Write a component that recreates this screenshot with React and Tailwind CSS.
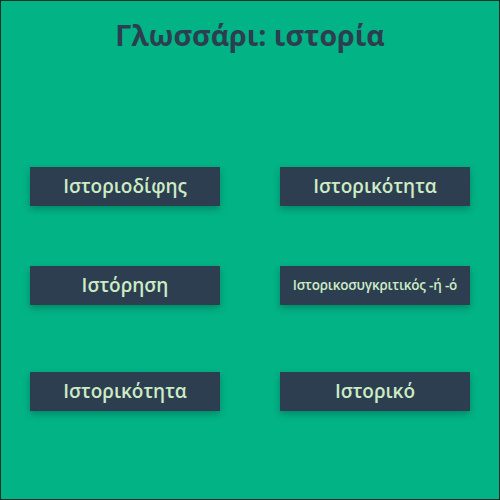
const rows = [
  { gap: 'mt-[112px]', items: [{ label: 'Ιστοριοδίφης' }, { label: 'Ιστορικότητα' }] },
  { gap: 'mt-[60px]', items: [{ label: 'Ιστόρηση' }, { label: 'Ιστορικοσυγκριτικός -ή -ό', small: true }] },
  { gap: 'mt-[67px]', items: [{ label: 'Ιστορικότητα' }, { label: 'Ιστορικό' }] },
];

function TermCard({ label, small }) {
  return (
    <div
      className={
        'flex h-[39px] w-[190px] items-center justify-center bg-[#2c3e50] font-semibold text-[#cdebc4] shadow-[0_3px_7px_rgba(0,0,0,0.25)] ' +
        (small ? 'text-[13.5px] tracking-[-0.2px]' : 'text-[19px]')
      }
    >
      {label}
    </div>
  );
}

export default function App() {
  return (
    <div
      className="h-[500px] w-[500px] border border-[#163028] bg-[#02b386]"
      style={{ fontFamily: '"Open Sans", "Noto Sans", sans-serif' }}
    >
      <h1 className="pt-[14px] text-center text-[28.5px] font-bold leading-[40px] text-[#2c3e50]">
        Γλωσσάρι: ιστορία
      </h1>
      {rows.map((row, i) => (
        <div key={i} className={row.gap + ' grid grid-cols-2 gap-x-[60px] px-[29px]'}>
          {row.items.map((t, j) => (
            <TermCard key={j} {...t} />
          ))}
        </div>
      ))}
    </div>
  );
}
